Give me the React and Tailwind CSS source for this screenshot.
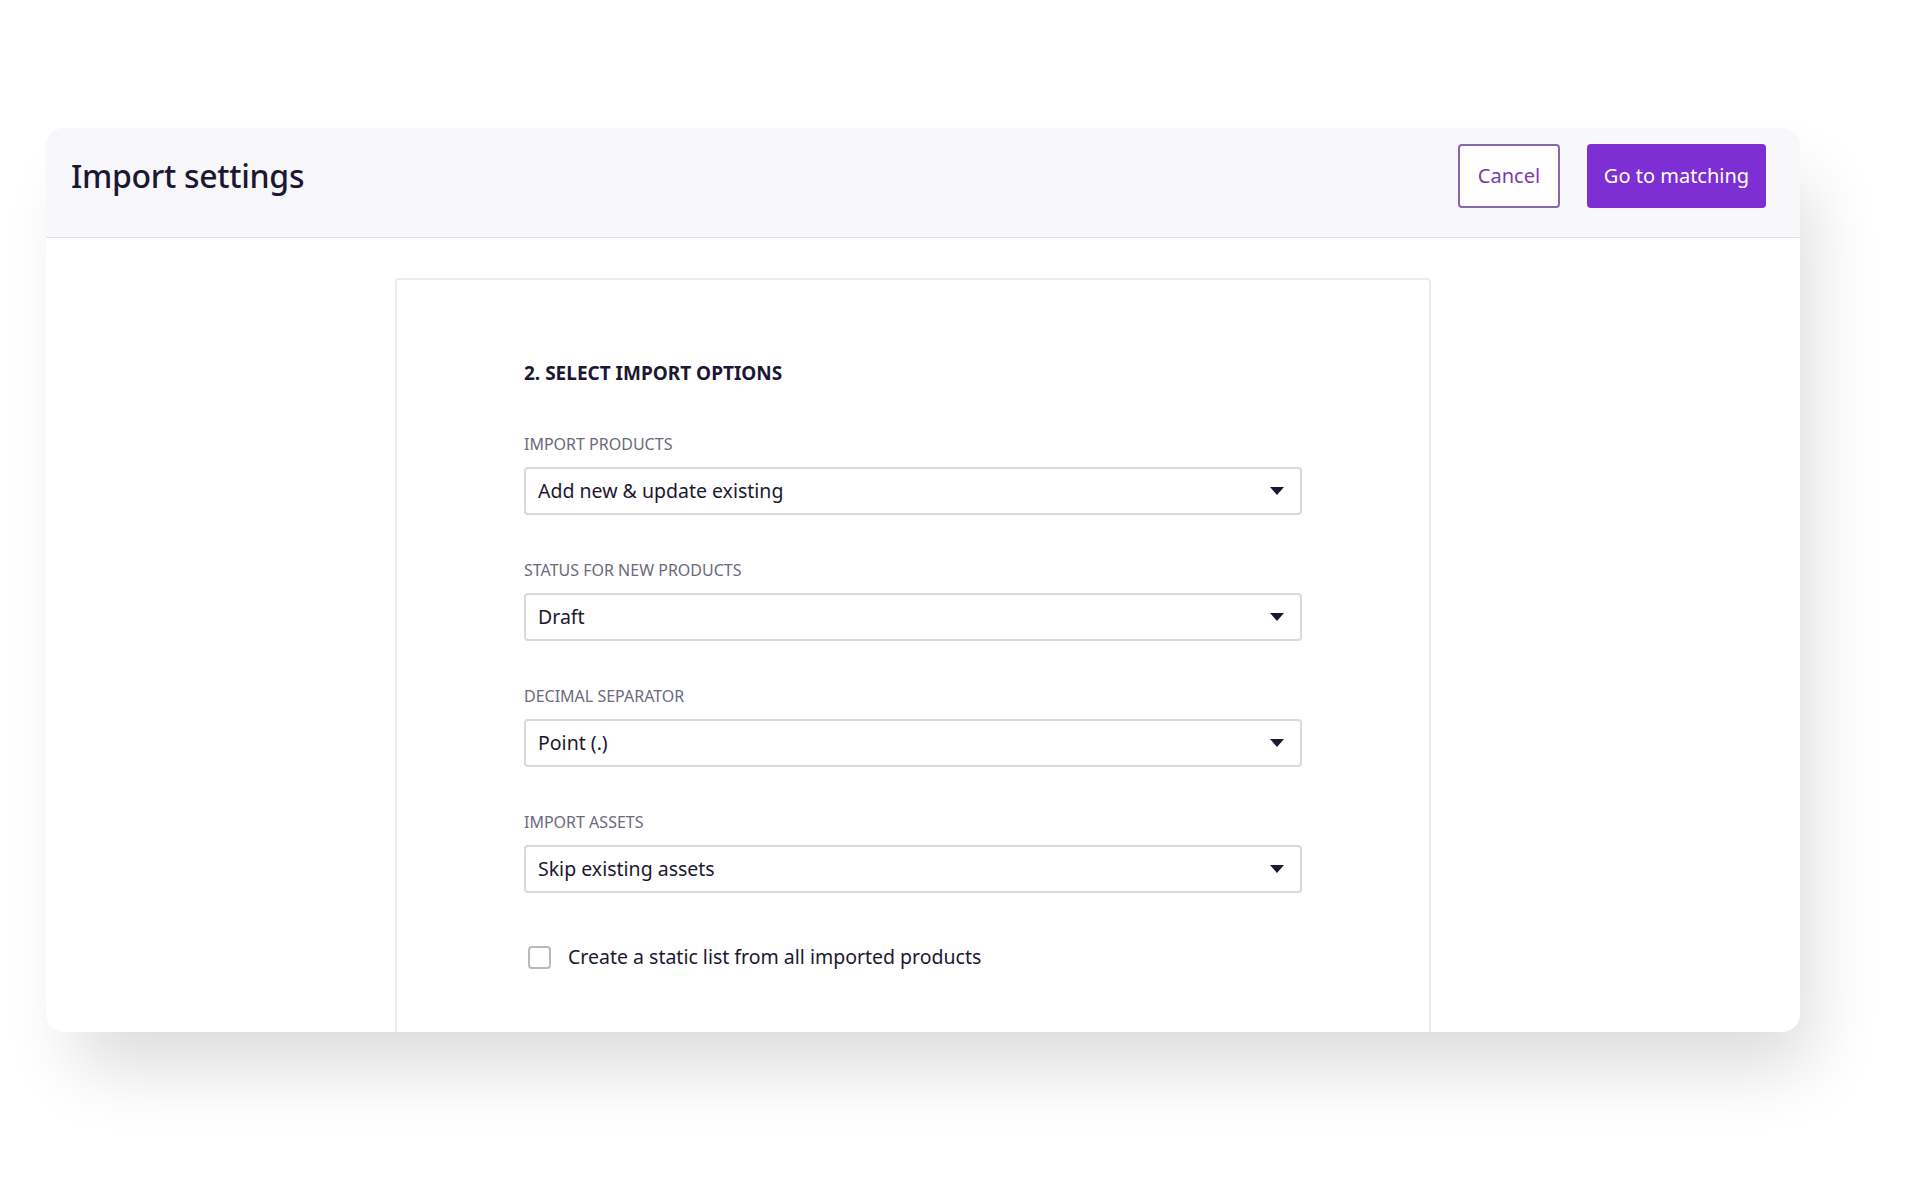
import React from 'react';

const font = { fontFamily: '"Noto Sans", "Open Sans", sans-serif' };

function Caret() {
  return (
    <svg width="14" height="8" viewBox="0 0 14 8" className="shrink-0">
      <path d="M0 0 L14 0 L7 8 Z" fill="#1c1830" />
    </svg>
  );
}

function SelectField({ label, value }) {
  return (
    <div className="flex flex-col">
      <div className="text-[16px] leading-[22px] uppercase text-[#6c6a7a]">{label}</div>
      <div className="mt-3 h-[48px] w-[778px] rounded-[4px] border-2 border-[#d9d9de] bg-white flex items-center justify-between pl-[12px] pr-[16px]">
        <span className="text-[19.5px] text-[#1c1830]">{value}</span>
        <Caret />
      </div>
    </div>
  );
}

export default function App() {
  return (
    <div className="w-full h-[1200px] bg-white overflow-hidden pt-[128px] pl-[46px]" style={font}>
      <div className="w-[1754px] h-[904px] rounded-[18px] bg-white overflow-hidden flex flex-col shadow-[20px_45px_70px_-10px_rgba(0,0,0,0.14)]">
        <header className="h-[110px] shrink-0 bg-[#f8f8fa] border-b border-[#e2e2e6] flex items-center justify-between pl-[25px] pr-[34px] pt-[16px] pb-[30px]">
          <h1 className="text-[32px] font-medium text-[#1c1733] tracking-[-0.3px]">Import settings</h1>
          <div className="flex items-center gap-[27px]">
            <button className="h-[64px] w-[102px] rounded-[4px] border-2 border-[#8a64ac] text-[20px] text-[#7a3bb0] bg-white">
              Cancel
            </button>
            <button className="h-[64px] w-[179px] rounded-[4px] bg-[#7d2fd3] text-[20px] text-white">
              Go to matching
            </button>
          </div>
        </header>
        <div className="flex-1 pt-[40px] pl-[349px]">
          <div className="w-[1036px] h-full rounded-t-[4px] border-2 border-b-0 border-[#ececef] pl-[127px] pt-[80px]">
            <h2 className="text-[19px] leading-[27px] font-bold text-[#1c1733]">2. SELECT IMPORT OPTIONS</h2>
            <div className="mt-[46px] flex flex-col gap-[44px]">
              <SelectField label="Import products" value="Add new & update existing" />
              <SelectField label="Status for new products" value="Draft" />
              <SelectField label="Decimal separator" value="Point (.)" />
              <SelectField label="Import assets" value="Skip existing assets" />
            </div>
            <label className="mt-[49px] flex items-center h-[30px] pl-[4px]">
              <span className="w-[23px] h-[23px] rounded-[4px] border-2 border-[#b9b9c0] bg-white" />
              <span className="ml-[17px] text-[19.5px] text-[#1c1830]">Create a static list from all imported products</span>
            </label>
          </div>
        </div>
      </div>
    </div>
  );
}
